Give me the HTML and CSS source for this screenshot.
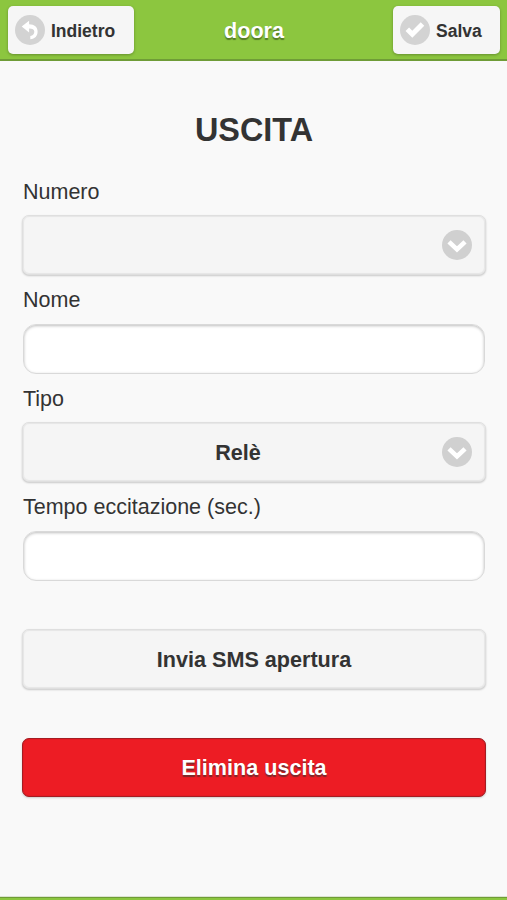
FILE: index.html
```html
<!DOCTYPE html>
<html lang="it">
<head>
<meta charset="utf-8">
<title>doora</title>
<link rel="stylesheet" href="styles.css">
</head>
<body>
<header class="bar">
  <button class="bar-button" type="button">
    <svg class="bar-icon" viewBox="0 0 30 30"><circle cx="15" cy="15" r="15" fill="#d3d3d3"/><path d="M6.7 11.6 14.1 5.8V9.2C19.5 9.3 22.6 12 22.6 16.4C22.6 21 20 23.6 15.3 24.2V21C18 20.5 19.3 19 19.3 16.7C19.3 14.4 17.5 13.4 14.1 13.4V17.4Z" fill="#fff"/></svg>
    <span class="bar-text">Indietro</span>
  </button>
  <h1 class="bar-title">doora</h1>
  <button class="bar-button save" type="button">
    <svg class="bar-icon" viewBox="0 0 30 30"><circle cx="15" cy="15" r="15" fill="#d3d3d3"/><path d="m7.3 14.3 5 5L22.5 9" fill="none" stroke="#fff" stroke-width="5"/></svg>
    <span class="bar-text">Salva</span>
  </button>
</header>
<main class="content">
  <h2 class="heading">USCITA</h2>
  <form class="form">
    <span class="label">Numero</span>
    <button class="button select" type="button" aria-label="Numero">
      <svg class="chevron" viewBox="0 0 30 30"><circle cx="15" cy="15" r="15" fill="#d0d0d0"/><path d="m7 11.8 8 7.6 8-7.6" fill="none" stroke="#fff" stroke-width="4.6"/></svg>
    </button>
    <label class="label" for="nome">Nome</label>
    <input class="input" id="nome" type="text">
    <span class="label">Tipo</span>
    <button class="button select" type="button">Relè
      <svg class="chevron" viewBox="0 0 30 30"><circle cx="15" cy="15" r="15" fill="#d0d0d0"/><path d="m7 11.8 8 7.6 8-7.6" fill="none" stroke="#fff" stroke-width="4.6"/></svg>
    </button>
    <label class="label" for="tempo">Tempo eccitazione (sec.)</label>
    <input class="input" id="tempo" type="text">
    <button class="button action" type="button">Invia SMS apertura</button>
    <button class="button action delete" type="button">Elimina uscita</button>
  </form>
</main>
<footer class="footer"></footer>
</body>
</html>
```
FILE: styles.css
```css
* {
  box-sizing: border-box;
}

body {
  margin: 0;
  height: 900px;
  display: flex;
  flex-direction: column;
  overflow: hidden;
  background: #f9f9f9;
  color: #333;
  font-family: "Liberation Sans", Arial, sans-serif;
  font-size: 21.5px;
}

.bar {
  flex: none;
  height: 61px;
  padding: 6px 7px 0 8px;
  display: grid;
  grid-template-columns: 1fr auto 1fr;
  align-items: start;
  background: #8cc63f;
  border-bottom: 2px solid #6f9c37;
}

.bar-title {
  margin: 0;
  font-size: 21.6px;
  line-height: 50px;
  color: #fff;
  text-shadow: 0 1.5px 1px #557a28;
}

.bar-button {
  justify-self: start;
  width: 126px;
  height: 48px;
  padding: 0 0 0 7px;
  display: flex;
  align-items: center;
  gap: 6px;
  background: #f6f6f6;
  border: 0;
  border-radius: 5px;
  box-shadow: 0 1px 3px rgba(0, 0, 0, .28);
  color: #333;
  font: bold 17.5px "Liberation Sans", Arial, sans-serif;
  text-shadow: 0 1px 0 #f3f3f3;
}

.bar-button.save {
  justify-self: end;
  width: 107px;
}

.bar-icon {
  width: 30px;
  height: 30px;
}

.bar-text {
  padding-top: 3px;
}

.content {
  flex: 1;
  padding: 48px 21px 0 22px;
}

.heading {
  margin: 0;
  font-size: 32.4px;
  line-height: 42px;
  text-align: center;
}

.form {
  display: flex;
  flex-direction: column;
  padding-top: 26px;
}

.label {
  height: 38px;
  padding-left: 1px;
  line-height: 30px;
}

.button {
  position: relative;
  height: 60px;
  padding: 2px 0 0;
  background: #f5f5f5;
  border: 1px solid #dfdfdf;
  border-radius: 7px;
  box-shadow: 0 1px 2px rgba(0, 0, 0, .2), inset 0 0 1px 1px #e6e6e6;
  color: #333;
  font: bold 21.6px "Liberation Sans", Arial, sans-serif;
  text-shadow: 0 1px 0 #f3f3f3;
}

.select {
  margin-bottom: 10px;
  padding-right: 32px;
}

.chevron {
  position: absolute;
  top: 14px;
  right: 13px;
  width: 30px;
  height: 30px;
}

.input {
  height: 50px;
  margin: 1px 1px 10px;
  padding: 0 10px;
  background: #fff;
  border: 1px solid #d9d9d9;
  border-radius: 13px;
  box-shadow: inset 0 1px 3px rgba(0, 0, 0, .26);
  font: inherit;
}

.action {
  margin-top: 38px;
}

.delete {
  height: 59px;
  margin-top: 49px;
  padding-top: 0;
  background: #ed1c24;
  border: 1px solid #a51c22;
  box-shadow: 0 1px 2px rgba(0, 0, 0, .18), inset 0 0 1px #a51c22;
  color: #fff;
  text-shadow: 0 1.5px 1px #7c292c;
}

.footer {
  flex: none;
  height: 4px;
  background: #8cc63f;
  border-top: 1px solid #dce4d1;
  box-shadow: inset 0 1px 0 #6f9c37;
}
```
